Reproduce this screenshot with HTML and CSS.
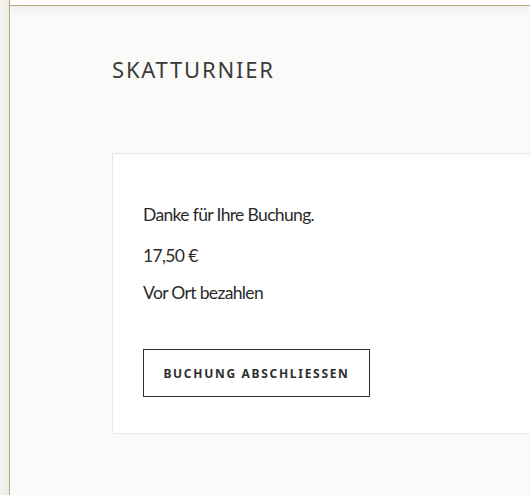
FILE: index.html
```html
<!DOCTYPE html>
<html lang="de">
<head>
<meta charset="utf-8">
<link rel="stylesheet" href="styles.css">
</head>
<body>
<div class="page">
  <div class="strip"></div>
  <div class="main">
    <div class="topbar"></div>
    <div class="content">
      <h1 class="title">SKATTURNIER</h1>
      <div class="card">
        <p class="line line-first">Danke für Ihre Buchung.</p>
        <p class="line line-price">17,50 €</p>
        <p class="line">Vor Ort bezahlen</p>
        <button class="btn">BUCHUNG ABSCHLIESSEN</button>
      </div>
    </div>
  </div>
</div>
</body>
</html>
```
FILE: styles.css
```css
html, body { margin: 0; padding: 0; height: 100%; }
body { background: #f3f1ec; font-family: Lato, "Liberation Sans", sans-serif; color: #2b2b2b; overflow: hidden; }
.page { display: flex; height: 495px; }
.strip { width: 9px; background: linear-gradient(to right, #f4f2ed, #eeece6); }
.main { flex: 1; border-left: 1px solid #b8a97c; background: #fafaf8; overflow: hidden; }
.topbar { height: 5px; background: #fff; border-bottom: 1px solid #b8a97c; box-shadow: 0 3px 12px rgba(0,0,0,0.09); position: relative; }
.content { padding: 49px 0 0 102px; }
.title { margin: 0; font-family: "Noto Sans", sans-serif; font-weight: 400; font-size: 22px; letter-spacing: 1.8px; color: #3a3a3a; line-height: 28px; }
.card { margin-top: 70px; background: #fff; border: 1px solid #e6e6e6; border-right: none; padding: 49px 30px 36px; }
.line { margin: 0; font-size: 17.5px; letter-spacing: -0.65px; line-height: 24px; color: #2a2a2a; }
.line-first { margin-bottom: 17px; }
.line-price { margin-bottom: 13px; }
.btn { display: block; margin-top: 44px; background: #fff; border: 1px solid #2e2e2e; padding: 0; height: 48px; width: 227px; font-family: "Noto Sans", sans-serif; font-weight: 700; font-size: 12px; letter-spacing: 1.7px; color: #2e2e2e; cursor: pointer; }
```
